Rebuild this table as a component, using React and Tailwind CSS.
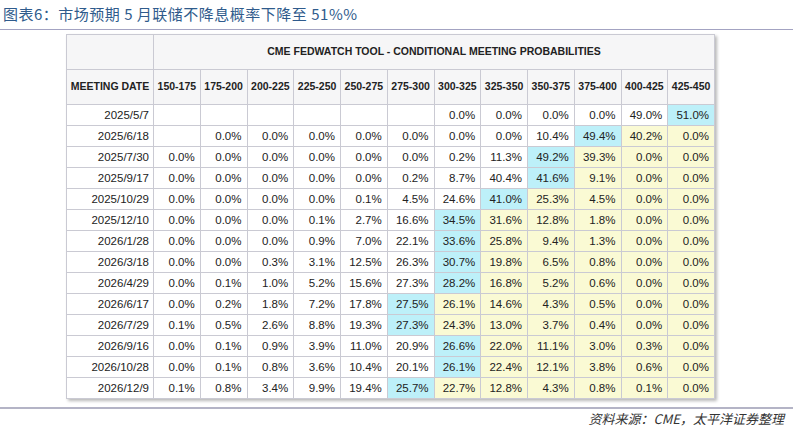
import React from 'react';

const ranges = ['150-175', '175-200', '200-225', '225-250', '250-275', '275-300', '300-325', '325-350', '350-375', '375-400', '400-425', '425-450'];

// each row: date, values (null = blank), index of the highlighted (blue) cell
const rows = [
  ['2025/5/7', [null, null, null, null, null, null, '0.0', '0.0', '0.0', '0.0', '49.0', '51.0'], 11],
  ['2025/6/18', [null, '0.0', '0.0', '0.0', '0.0', '0.0', '0.0', '0.0', '10.4', '49.4', '40.2', '0.0'], 9],
  ['2025/7/30', ['0.0', '0.0', '0.0', '0.0', '0.0', '0.0', '0.2', '11.3', '49.2', '39.3', '0.0', '0.0'], 8],
  ['2025/9/17', ['0.0', '0.0', '0.0', '0.0', '0.0', '0.2', '8.7', '40.4', '41.6', '9.1', '0.0', '0.0'], 8],
  ['2025/10/29', ['0.0', '0.0', '0.0', '0.0', '0.1', '4.5', '24.6', '41.0', '25.3', '4.5', '0.0', '0.0'], 7],
  ['2025/12/10', ['0.0', '0.0', '0.0', '0.1', '2.7', '16.6', '34.5', '31.6', '12.8', '1.8', '0.0', '0.0'], 6],
  ['2026/1/28', ['0.0', '0.0', '0.0', '0.9', '7.0', '22.1', '33.6', '25.8', '9.4', '1.3', '0.0', '0.0'], 6],
  ['2026/3/18', ['0.0', '0.0', '0.3', '3.1', '12.5', '26.3', '30.7', '19.8', '6.5', '0.8', '0.0', '0.0'], 6],
  ['2026/4/29', ['0.0', '0.1', '1.0', '5.2', '15.6', '27.3', '28.2', '16.8', '5.2', '0.6', '0.0', '0.0'], 6],
  ['2026/6/17', ['0.0', '0.2', '1.8', '7.2', '17.8', '27.5', '26.1', '14.6', '4.3', '0.5', '0.0', '0.0'], 5],
  ['2026/7/29', ['0.1', '0.5', '2.6', '8.8', '19.3', '27.3', '24.3', '13.0', '3.7', '0.4', '0.0', '0.0'], 5],
  ['2026/9/16', ['0.0', '0.1', '0.9', '3.9', '11.0', '20.9', '26.6', '22.0', '11.1', '3.0', '0.3', '0.0'], 6],
  ['2026/10/28', ['0.0', '0.1', '0.8', '3.6', '10.4', '20.1', '26.1', '22.4', '12.1', '3.8', '0.6', '0.0'], 6],
  ['2026/12/9', ['0.1', '0.8', '3.4', '9.9', '19.4', '25.7', '22.7', '12.8', '4.3', '0.8', '0.1', '0.0'], 5],
];

const cellBg = (i, hi) => {
  if (i === hi) return 'bg-[#bdf0f9]';
  if (i > hi && hi < 11) return 'bg-[#fafad4]';
  return 'bg-white';
};

const App = () => {
  return (
    <div className="w-[810px] h-[434px] bg-white flex flex-col font-['Liberation_Sans',Arial,sans-serif] overflow-hidden">
      {/* Title */}
      <div className="h-[29px] pl-[3px] pt-[4px] text-[15px] leading-[20px] text-[#2f5b8c] tracking-[0.5px] font-['Noto_Sans_CJK_SC',sans-serif]">
        图表6：市场预期 5 月联储不降息概率下降至 51%%
      </div>
      <div className="w-[793px] h-px bg-[#a3a3c2]" />

      {/* Table */}
      <div className="pl-[66px] pt-[4px]">
        <table className="table-fixed w-[649px] border-collapse border border-[#c6c6cf] text-[#222] shadow-[2px_2px_3px_rgba(0,0,0,0.28)]">
          <colgroup>
            <col className="w-[87px]" />
            {ranges.map((r) => (
              <col key={r} />
            ))}
          </colgroup>
          <thead>
            <tr className="h-[35px]">
              <th className="bg-[#f6f6f7] border border-[#cacad3]" />
              <th colSpan={12} className="bg-[#f6f6f7] border border-[#cacad3] text-[10.5px] font-bold text-center">
                CME FEDWATCH TOOL - CONDITIONAL MEETING PROBABILITIES
              </th>
            </tr>
            <tr className="h-[35px]">
              <th className="bg-[#f6f6f7] border border-[#cacad3] text-[10.5px] font-bold text-center whitespace-nowrap px-0">
                MEETING DATE
              </th>
              {ranges.map((r) => (
                <th key={r} className="bg-[#f6f6f7] border border-[#cacad3] text-[10.5px] font-bold text-center px-0">
                  {r}
                </th>
              ))}
            </tr>
          </thead>
          <tbody>
            {rows.map(([date, vals, hi]) => (
              <tr key={date} className="h-[21px]">
                <td className="bg-white border border-[#cacad3] text-[11.5px] leading-[14px] text-right pr-[4px] py-0">{date}</td>
                {vals.map((v, i) => (
                  <td
                    key={i}
                    className={`${cellBg(i, hi)} border border-[#cacad3] text-[11.5px] leading-[14px] text-right pr-[5px] py-0`}
                  >
                    {v === null ? '' : `${v}%`}
                  </td>
                ))}
              </tr>
            ))}
          </tbody>
        </table>
      </div>

      {/* Footer */}
      <div className="mt-[8px] w-[793px] h-[2px] bg-[#b4b4c6]" />
      <div className="w-[784px] text-right pt-[1px] text-[13px] leading-[18px] italic text-[#333] font-['Noto_Sans_CJK_SC',sans-serif]">
        资料来源：CME，太平洋证券整理
      </div>
    </div>
  );
};

export default App;
